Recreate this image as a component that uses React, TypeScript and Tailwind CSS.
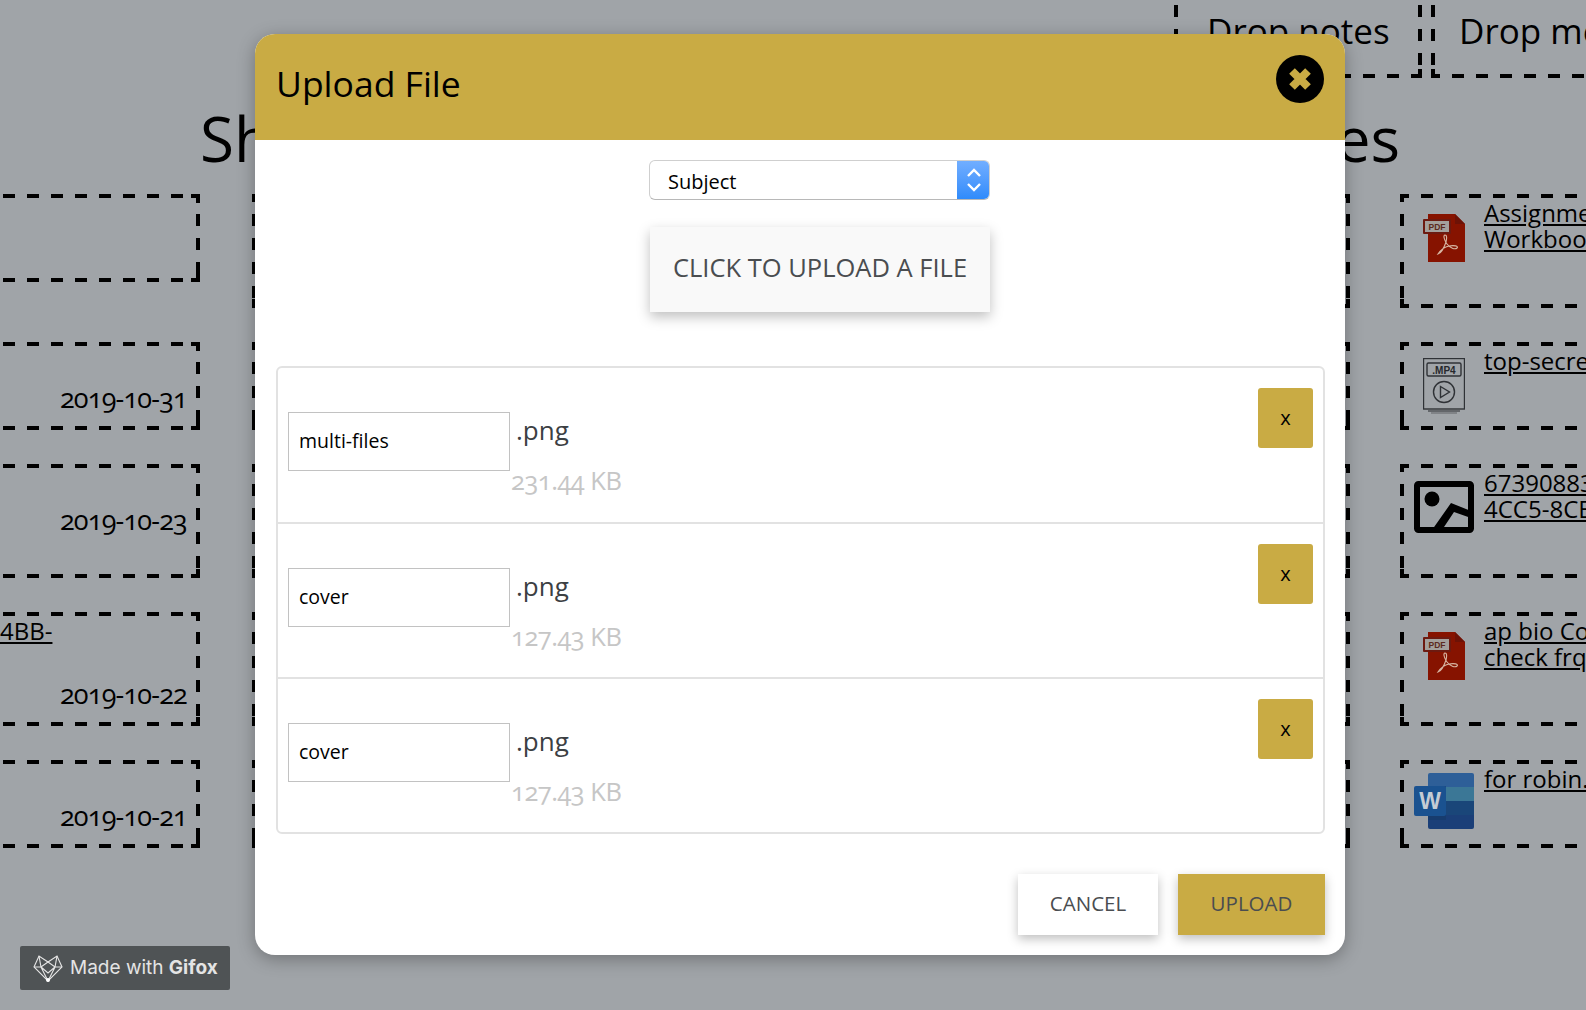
import { ReactNode } from 'react'

const gold = 'bg-[#c9ab44]'

// dashes of 12px with a gap of 12px, plus a short dash in each corner, like the page behind the modal
const dashed =
  "[background-image:linear-gradient(90deg,#000_50%,transparent_50%),linear-gradient(90deg,#000_50%,transparent_50%),linear-gradient(180deg,#000_50%,transparent_50%),linear-gradient(180deg,#000_50%,transparent_50%),linear-gradient(#000,#000),linear-gradient(#000,#000),linear-gradient(#000,#000),linear-gradient(#000,#000),linear-gradient(#000,#000),linear-gradient(#000,#000)] [background-size:24px_4px,24px_4px,4px_24px,4px_24px,9px_4px,4px_9px,9px_4px,4px_9px,9px_4px,4px_9px] [background-position:-3px_0,-3px_100%,0_-4px,100%_-4px,100%_0,100%_0,0_100%,0_100%,100%_100%,100%_100%] [background-repeat:repeat-x,repeat-x,repeat-y,repeat-y,no-repeat,no-repeat,no-repeat,no-repeat,no-repeat,no-repeat]"

const files = [
  { name: 'multi-files', size: '231.44 KB' },
  { name: 'cover', size: '127.43 KB' },
  { name: 'cover', size: '127.43 KB' },
]

function PdfIcon() {
  return (
    <svg width="42" height="48" viewBox="0 0 42 48" className="shrink-0">
      <path d="M5 0h27l10 10v38H5z" fill="#861300" />
      <path d="M32 0l10 10H32z" fill="#6d1206" />
      <rect x="0" y="5" width="28" height="15" rx="1" fill="#6d1a10" />
      <rect x="2" y="7" width="24" height="11" fill="#a4a09c" />
      <text x="14" y="16" textAnchor="middle" fontSize="8.5" fontWeight="700" fill="#5c2a20" fontFamily="Liberation Sans, sans-serif">PDF</text>
      <path
        d="M15 40c3-1 6-6 8-12 1-4 1-7-1-7s-1 5 2 9 8 6 10 4-3-3-8-2-9 5-11 8z"
        fill="none"
        stroke="#d8b8a4"
        strokeWidth="1.1"
      />
    </svg>
  )
}

function Mp4Icon() {
  return (
    <svg width="42" height="56" viewBox="0 0 42 56" className="shrink-0">
      <rect x="0.5" y="0.5" width="41" height="50.5" fill="none" stroke="#2f3236" strokeWidth="1.4" />
      <rect x="4" y="5" width="34" height="13" rx="1.5" fill="none" stroke="#2f3236" strokeWidth="1.4" />
      <text x="21" y="15.5" textAnchor="middle" fontSize="10" fontWeight="700" fill="#26282c" fontFamily="Liberation Sans, sans-serif">.MP4</text>
      <circle cx="21" cy="34" r="10.5" fill="none" stroke="#2f3236" strokeWidth="1.4" />
      <path d="M17.5 28.5l9 5.5-9 5.5z" fill="none" stroke="#2f3236" strokeWidth="1.4" />
      <path d="M5 53h32" stroke="#3b3e42" strokeWidth="1.2" />
      <path d="M8 55h26" stroke="#6b6e72" strokeWidth="1.2" />
    </svg>
  )
}

function ImageIcon() {
  return (
    <svg width="60" height="52" viewBox="0 0 60 52" className="shrink-0">
      <rect x="3" y="3" width="54" height="46" rx="1.5" fill="none" stroke="#000" strokeWidth="6" />
      <circle cx="18" cy="18" r="7.5" fill="#000" />
      <path d="M18 49l19-27 20 8v7L40 31 28 49z" fill="#000" />
    </svg>
  )
}

function WordIcon() {
  return (
    <svg width="60" height="56" viewBox="0 0 60 56" className="shrink-0">
      <path d="M14 2a2 2 0 012-2h42a2 2 0 012 2v12H14z" fill="#2e5f98" />
      <rect x="14" y="14" width="46" height="14" fill="#3b7796" />
      <rect x="14" y="28" width="46" height="14" fill="#1a4679" />
      <path d="M14 42h46v12a2 2 0 01-2 2H16a2 2 0 01-2-2z" fill="#1b3f78" />
      <rect x="14" y="13" width="18" height="34" fill="#153a68" opacity="0.6" />
      <rect x="0" y="13" width="32" height="30" rx="2" fill="#1a5290" />
      <text x="16" y="36" textAnchor="middle" fontSize="23" fontWeight="700" fill="#c5ccd4" fontFamily="Liberation Sans, sans-serif">W</text>
    </svg>
  )
}

function FoxLogo() {
  return (
    <svg width="30" height="28" viewBox="0 0 30 28" fill="none" stroke="#e6e6e6" strokeWidth="1.1" className="shrink-0">
      <path d="M1 13L6 2l9 6 9-6 5 11-14 14z" />
      <path d="M6 2l2 11 7 14 7-14 2-11M1 13h7l7-5 7 5h7M8 13l7 6 7-6" />
      <circle cx="15" cy="26" r="2" fill="#fff" stroke="none" />
    </svg>
  )
}

function Card({ className, children }: { className?: string; children?: ReactNode }) {
  return <div className={`${dashed} p-[4px] ${className ?? ''}`}>{children}</div>
}

function DateCard({ date, link, className }: { date?: string; link?: string; className?: string }) {
  return (
    <Card className={`pl-[42px] pr-[13px] ${className ?? ''}`}>
      <div className={`text-[24px] leading-[26px] underline mt-[2px] ${link ? 'h-[52px]' : 'h-[26px]'}`}>{link}</div>
      {date && <div className="text-right text-[27px] leading-[38px] tracking-[-0.8px] mt-[5px] oldstyle-nums">{date}</div>}
    </Card>
  )
}

function FileCard({ icon, lines, iconClass }: { icon: ReactNode; lines: string[]; iconClass: string }) {
  return (
    <Card className="h-full flex items-start">
      <div className={`w-[80px] flex justify-center shrink-0 ${iconClass}`}>{icon}</div>
      <div className="text-[24px] leading-[25.5px] underline whitespace-nowrap mt-[2px]">
        {lines.map((line) => (
          <div key={line}>{line}</div>
        ))}
      </div>
    </Card>
  )
}

function Background() {
  return (
    <div className="text-black">
      {/* drop zones */}
      <div className="flex justify-end h-[78px] gap-[9px] -mr-[100px]">
        <Card className="-mt-[15px] h-[93px] w-[248px] pl-[33px] pt-[23px] text-[35px] leading-[46px] whitespace-nowrap">Drop notes</Card>
        <Card className="-mt-[15px] h-[93px] w-[255px] pl-[28px] pt-[23px] text-[35px] leading-[46px] whitespace-nowrap">Drop media</Card>
      </div>

      {/* heading, the middle of it is behind the modal */}
      <div className="flex justify-between pl-[200px] pr-[186px] text-[62px] leading-[80px] mt-[20px] mb-[16px]">
        <span>Sh</span>
        <span>es</span>
      </div>

      <div className="grid grid-cols-[242px_1100px_400px] gap-x-[50px] grid-rows-[114px_88px_114px_114px_88px] gap-y-[34px] -ml-[42px]">
        <DateCard className="h-[88px]" />
        <Card className="ml-[2px]" />
        <FileCard icon={<PdfIcon />} lines={['Assignment', 'Workbook']} iconClass="pt-[16px]" />

        <DateCard date="2019-10-31" />
        <Card className="ml-[2px]" />
        <FileCard icon={<Mp4Icon />} lines={['top-secret']} iconClass="pt-[12px]" />

        <DateCard date="2019-10-23" />
        <Card className="ml-[2px]" />
        <FileCard icon={<ImageIcon />} lines={['67390883', '4CC5-8CE']} iconClass="pt-[13px]" />

        <DateCard date="2019-10-22" link="4BB-" />
        <Card className="ml-[2px]" />
        <FileCard icon={<PdfIcon />} lines={['ap bio Col', 'check frq']} iconClass="pt-[16px]" />

        <DateCard date="2019-10-21" />
        <Card className="ml-[2px]" />
        <FileCard icon={<WordIcon />} lines={['for robin.docx']} iconClass="pt-[9px]" />
      </div>
    </div>
  )
}

function FileRow({ name, size, last }: { name: string; size: string; last: boolean }) {
  return (
    <div className={`flex items-start pl-[10px] pr-[10px] ${last ? 'h-[153px]' : 'h-[155.5px] border-b-2 border-[#e2e2e2]'}`}>
      <input
        defaultValue={name}
        className="mt-[44px] w-[222px] h-[59px] border border-[#c2c2c2] px-[10px] pb-[2px] text-[19.5px] text-black outline-none"
      />
      <div className="mt-[43px] ml-px">
        <div className="pl-[5px] text-[26px] leading-[38px] text-[#3c4043]">.png</div>
        <div className="mt-[12px] text-[25.5px] leading-[38px] tracking-[-0.5px] text-[#c6c6c6] oldstyle-nums">{size}</div>
      </div>
      <button className={`ml-auto mt-[20px] w-[55px] h-[60px] rounded-[3px] ${gold} text-[20px] text-black`}>x</button>
    </div>
  )
}

function UploadModal() {
  return (
    <div className="absolute left-[255px] top-[34px] w-[1090px] h-[921px] rounded-[20px] bg-white overflow-hidden shadow-[0_4px_18px_rgba(0,0,0,0.3)]">
      <div className={`h-[106px] ${gold} flex items-center justify-between pl-[21px] pr-[21px]`}>
        <h2 className="text-[35.5px] leading-none text-black -mt-[6px]">Upload File</h2>
        <svg width="48" height="48" viewBox="0 0 48 48" className="-mt-[16px]">
          <circle cx="24" cy="24" r="24" fill="#000" />
          <path d="M16 16l16 16M32 16L16 32" stroke="#c9ab44" strokeWidth="8" strokeLinecap="butt" />
        </svg>
      </div>

      <div className="flex flex-col items-center pt-[20px] pl-[40px]">
        <div className="w-[341px] -ml-px h-[40px] rounded-[6px] border border-[#cfcfcf] border-b-[#b8b8b8] flex items-center justify-between overflow-hidden pl-[18px] text-[20px] text-black">
          <span className="pt-[3px]">Subject</span>
          <span className="w-[33px] h-full bg-gradient-to-b from-[#71aeff] to-[#2f8bfb] flex items-center justify-center -mr-px">
            <svg width="18" height="30" viewBox="0 0 18 30" fill="none" stroke="#fff" strokeWidth="2.4">
              <path d="M3 11l6-6 6 6M3 19l6 6 6-6" />
            </svg>
          </span>
        </div>
        <button className="mt-[27px] w-[340px] h-[85px] pb-[4px] bg-[#f9f9f9] text-[25.5px] text-[#4a4d50] shadow-[0_5px_12px_rgba(0,0,0,0.25)]">
          CLICK TO UPLOAD A FILE
        </button>
      </div>

      <div className="mt-[54px] ml-[21px] mr-[20px] border-2 border-[#e2e2e2] rounded-[6px]">
        {files.map((file, index) => (
          <FileRow key={index} name={file.name} size={file.size} last={index === files.length - 1} />
        ))}
      </div>

      <div className="mt-[40px] pr-[20px] flex justify-end gap-[20px] text-[20.5px] text-[#4a4d50]">
        <button className="w-[140px] h-[61px] pb-[2px] bg-white shadow-[0_4px_10px_rgba(0,0,0,0.25)]">CANCEL</button>
        <button className={`w-[147px] h-[61px] pb-[2px] ${gold} shadow-[0_4px_10px_rgba(0,0,0,0.25)]`}>UPLOAD</button>
      </div>
    </div>
  )
}

export default function App() {
  return (
    <div className="relative h-screen w-full overflow-hidden bg-[#a0a4a8] font-['Open_Sans',sans-serif]">
      <Background />
      <UploadModal />
      {/* recorder watermark */}
      <div className="absolute left-[20px] top-[946px] w-[210px] h-[44px] rounded-[2px] bg-[#4f5355] flex items-center pl-[13px] gap-[7px] text-[19px] text-[#e4e4e4] font-['Inter',sans-serif]">
        <FoxLogo />
        <span>
          Made with <b>Gifox</b>
        </span>
      </div>
    </div>
  )
}
